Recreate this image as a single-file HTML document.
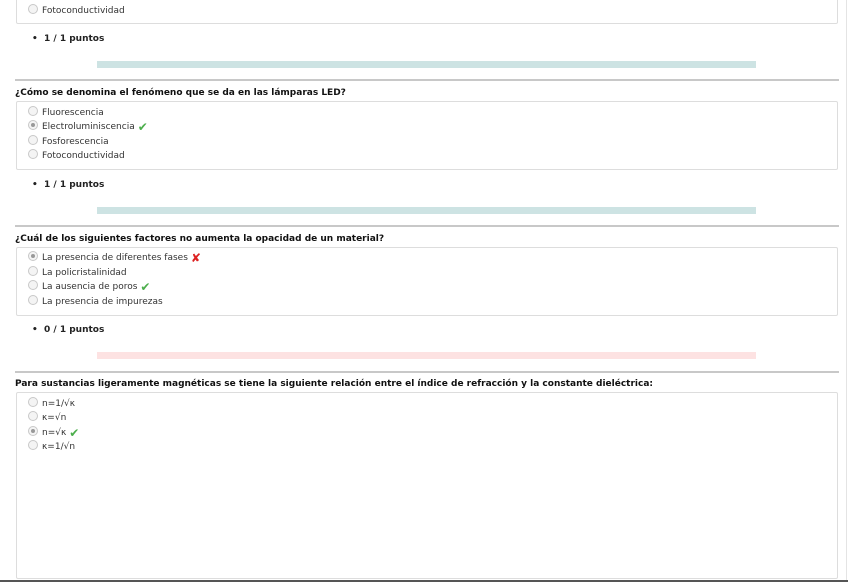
<!DOCTYPE html>
<html><head><meta charset="utf-8"><style>
body{margin:0;width:848px;height:582px;background:#fff;position:relative;overflow:hidden;font-family:"DejaVu Sans","Liberation Sans",sans-serif;font-size:9px;color:#222}
.a{position:absolute}
.box{position:absolute;left:16px;width:820px;border:1px solid #ddd;border-radius:2px;background:#fff}
.line{position:absolute;left:15px;width:824px;height:2px;background:#c8c8c8}
.bar{position:absolute;left:97px;width:659px;height:7px}
.q{position:absolute;left:15px;font-weight:bold;font-size:9px;color:#111;white-space:nowrap}
.o{position:absolute;left:28px;height:14px;line-height:14px;color:#333;font-size:9px;white-space:nowrap}
.r{display:inline-block;width:8px;height:8px;border:1px solid #c8c8c8;border-radius:50%;background:#f4f4f4;vertical-align:-1px;margin-right:4px;position:relative}
.r.s::after{content:"";position:absolute;left:2px;top:2px;width:4px;height:4px;border-radius:50%;background:#999}
.p{position:absolute;left:32px;font-weight:bold;font-size:9px;color:#222}
.ck,.x{display:inline-block;height:14px;line-height:14px;font-weight:bold;font-size:12px;margin-left:3px;vertical-align:top;font-family:"DejaVu Sans",sans-serif}
.ck{color:#4cae4c}
.x{color:#d22}
</style></head><body>
<div class="box" style="top:-5px;height:27px"></div>
<div class="o" style="top:4px"><span class="r"></span>Fotoconductividad</div>
<div class="p" style="top:34px">•&nbsp; 1 / 1 puntos</div>
<div class="bar" style="top:61px;background:#cde3e3"></div>
<div class="line" style="top:79px"></div>

<div class="q" style="top:88px">¿Cómo se denomina el fenómeno que se da en las lámparas LED?</div>
<div class="box" style="top:101px;height:67px"></div>
<div class="o" style="top:106px"><span class="r"></span>Fluorescencia</div>
<div class="o" style="top:120px"><span class="r s"></span>Electroluminiscencia<span class="ck">✔</span></div>
<div class="o" style="top:135px"><span class="r"></span>Fosforescencia</div>
<div class="o" style="top:149px"><span class="r"></span>Fotoconductividad</div>
<div class="p" style="top:180px">•&nbsp; 1 / 1 puntos</div>
<div class="bar" style="top:207px;background:#cde3e3"></div>
<div class="line" style="top:225px"></div>

<div class="q" style="top:234px">¿Cuál de los siguientes factores no aumenta la opacidad de un material?</div>
<div class="box" style="top:247px;height:67px"></div>
<div class="o" style="top:251px"><span class="r s"></span>La presencia de diferentes fases<span class="x">✘</span></div>
<div class="o" style="top:266px"><span class="r"></span>La policristalinidad</div>
<div class="o" style="top:280px"><span class="r"></span>La ausencia de poros<span class="ck">✔</span></div>
<div class="o" style="top:295px"><span class="r"></span>La presencia de impurezas</div>
<div class="p" style="top:325px">•&nbsp; 0 / 1 puntos</div>
<div class="bar" style="top:352px;background:#fde2e2"></div>
<div class="line" style="top:371px"></div>

<div class="q" style="top:379px">Para sustancias ligeramente magnéticas se tiene la siguiente relación entre el índice de refracción y la constante dieléctrica:</div>
<div class="box" style="top:392px;height:185px"></div>
<div class="o" style="top:397px"><span class="r"></span>n=1/√κ</div>
<div class="o" style="top:411px"><span class="r"></span>κ=√n</div>
<div class="o" style="top:426px"><span class="r s"></span>n=√κ<span class="ck">✔</span></div>
<div class="o" style="top:440px"><span class="r"></span>κ=1/√n</div>
<div class="a" style="left:0;top:580px;width:848px;height:2px;background:#555"></div>
<div class="a" style="left:846px;top:0;width:1px;height:580px;background:#e4e4e4"></div>
</body></html>
